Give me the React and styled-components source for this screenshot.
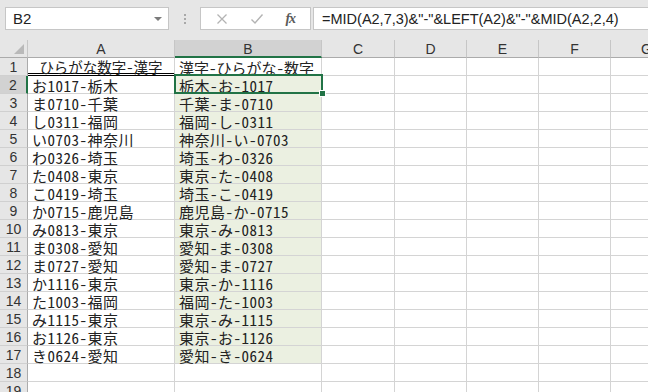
import React from "react";
import styled, { createGlobalStyle } from "styled-components";

const Global = createGlobalStyle`
  html, body { margin: 0; padding: 0; background: #ffffff; overflow: hidden; }
  body { width: 648px; height: 392px; }
  * { box-sizing: border-box; }
`;

const Page = styled.div`
  width: 648px;
  height: 392px;
  overflow: hidden;
  background: #ffffff;
  display: flex;
  flex-direction: column;
`;

const TopBar = styled.div`
  height: 40px;
  flex: none;
  background: #e6e6e6;
  display: flex;
  align-items: flex-start;
  padding: 7px 0 0 5px;
`;

const NameBox = styled.div`
  width: 164px;
  height: 23px;
  background: #ffffff;
  border: 1px solid #c6c6c6;
  display: flex;
  align-items: center;
  justify-content: space-between;
  padding: 0 6px 0 7px;
  font-family: "Liberation Sans", Arial, sans-serif;
  font-size: 15px;
  color: #222;
`;

const DropArrow = styled.span`
  width: 0;
  height: 0;
  border-left: 4px solid transparent;
  border-right: 4px solid transparent;
  border-top: 4px solid #7b7b7b;
  margin-top: 1px;
`;

const Dots = styled.div`
  width: 31px;
  height: 23px;
  display: flex;
  flex-direction: column;
  align-items: center;
  justify-content: center;
  gap: 2px;
  & > span {
    width: 2px;
    height: 2px;
    background: #a8a8a8;
  }
`;

const FxBox = styled.div`
  width: 111px;
  height: 23px;
  background: #ffffff;
  border: 1px solid #c6c6c6;
  display: flex;
  align-items: center;
  justify-content: space-around;
  padding: 0 4px;
`;

const FxLabel = styled.span`
  font-family: "Liberation Serif", "Times New Roman", serif;
  font-style: italic;
  font-weight: bold;
  font-size: 14px;
  color: #5b5b5b;
  letter-spacing: -1px;
`;

const FormulaInput = styled.div`
  flex: 1;
  height: 23px;
  margin-left: 2px;
  background: #ffffff;
  border: 1px solid #c6c6c6;
  border-right: none;
  display: flex;
  align-items: center;
  padding-left: 8px;
  font-family: "Liberation Sans", Arial, sans-serif;
  font-size: 14.5px;
  color: #222;
  white-space: nowrap;
  overflow: hidden;
`;

const Sheet = styled.div`
  flex: 1;
  display: grid;
  grid-template-columns: 28px 147px 147px 73px 72px 72px 72px 72px;
  grid-auto-rows: 18px;
  overflow: hidden;
  background: #ffffff;
`;

const Corner = styled.div`
  background: #e6e6e6;
  border-right: 1px solid #c6c6c6;
  border-bottom: 1px solid #ababab;
  position: relative;
  &::after {
    content: "";
    position: absolute;
    right: 3px;
    bottom: 3px;
    width: 0;
    height: 0;
    border-left: 10px solid transparent;
    border-bottom: 10px solid #b9b9b9;
  }
`;

const ColHeader = styled.div`
  background: ${(p) => (p.$sel ? "#d2d2d2" : "#e6e6e6")};
  border-right: 1px solid #c6c6c6;
  border-bottom: ${(p) => (p.$sel ? "2px solid #217346" : "1px solid #ababab")};
  display: flex;
  align-items: center;
  justify-content: center;
  padding-top: ${(p) => (p.$sel ? "1px" : "0")};
  font-family: "Liberation Sans", Arial, sans-serif;
  font-size: 14px;
  color: #333;
`;

const RowHeader = styled.div`
  background: ${(p) => (p.$sel ? "#d2d2d2" : "#e6e6e6")};
  border-right: ${(p) => (p.$sel ? "2px solid #217346" : "1px solid #ababab")};
  border-bottom: 1px solid #d0d0d0;
  display: flex;
  align-items: center;
  justify-content: center;
  padding-top: 1px;
  font-family: "Liberation Sans", Arial, sans-serif;
  font-size: 14px;
  color: #333;
`;

const Cell = styled.div`
  position: relative;
  background: ${(p) => (p.$shade ? "#ebf0e1" : "#ffffff")};
  border-right: 1px solid #d4d4d4;
  border-bottom: ${(p) => (p.$double ? "3px double #000000" : "1px solid #d4d4d4")};
  display: flex;
  align-items: center;
  justify-content: ${(p) => (p.$center ? "center" : "flex-start")};
  padding: 1px 0 0 ${(p) => (p.$center ? "0" : "4px")};
  font-family: "Noto Sans CJK JP", sans-serif;
  font-feature-settings: "hwid" 1;
  font-size: ${(p) => (p.$center ? "14.5px" : "15px")};
  letter-spacing: ${(p) => (p.$tight ? "0" : "0.5px")};
  line-height: 17px;
  color: #222;
  white-space: nowrap;
`;

const Selection = styled.div`
  position: absolute;
  top: -2px;
  left: -1px;
  right: -2px;
  bottom: -1px;
  border: 2px solid #217346;
  pointer-events: none;
  z-index: 2;
`;

const Handle = styled.div`
  position: absolute;
  right: -5px;
  bottom: -5px;
  width: 7px;
  height: 7px;
  background: #217346;
  border: 1px solid #ffffff;
`;

const rows = [
  ["お1017-栃木", "栃木-お-1017"],
  ["ま0710-千葉", "千葉-ま-0710"],
  ["し0311-福岡", "福岡-し-0311"],
  ["い0703-神奈川", "神奈川-い-0703"],
  ["わ0326-埼玉", "埼玉-わ-0326"],
  ["た0408-東京", "東京-た-0408"],
  ["こ0419-埼玉", "埼玉-こ-0419"],
  ["か0715-鹿児島", "鹿児島-か-0715"],
  ["み0813-東京", "東京-み-0813"],
  ["ま0308-愛知", "愛知-ま-0308"],
  ["ま0727-愛知", "愛知-ま-0727"],
  ["か1116-東京", "東京-か-1116"],
  ["た1003-福岡", "福岡-た-1003"],
  ["み1115-東京", "東京-み-1115"],
  ["お1126-東京", "東京-お-1126"],
  ["き0624-愛知", "愛知-き-0624"],
];

const cols = ["A", "B", "C", "D", "E", "F", "G"];

const XIcon = () => (
  <svg width="12" height="12" viewBox="0 0 12 12">
    <path d="M1.5 1.5 L10.5 10.5 M10.5 1.5 L1.5 10.5" stroke="#b3b3b3" strokeWidth="1.3" fill="none" />
  </svg>
);

const CheckIcon = () => (
  <svg width="14" height="12" viewBox="0 0 14 12">
    <path d="M1.5 6.5 L5 10 L12.5 1.5" stroke="#b3b3b3" strokeWidth="1.4" fill="none" />
  </svg>
);

const Empty = () => cols.slice(2).map((c) => <Cell key={c} />);

export default function App() {
  return (
    <Page>
      <Global />
      <TopBar>
        <NameBox>
          <span>B2</span>
          <DropArrow />
        </NameBox>
        <Dots>
          <span />
          <span />
          <span />
        </Dots>
        <FxBox>
          <XIcon />
          <CheckIcon />
          <FxLabel>fx</FxLabel>
        </FxBox>
        <FormulaInput>=MID(A2,7,3)&amp;"-"&amp;LEFT(A2)&amp;"-"&amp;MID(A2,2,4)</FormulaInput>
      </TopBar>
      <Sheet>
        <Corner />
        {cols.map((c) => (
          <ColHeader key={c} $sel={c === "B"}>
            {c}
          </ColHeader>
        ))}

        <RowHeader>1</RowHeader>
        <Cell $center $double $tight>ひらがな数字-漢字</Cell>
        <Cell $tight>漢字-ひらがな-数字</Cell>
        <Empty />

        {rows.map(([a, b], i) => (
          <React.Fragment key={i}>
            <RowHeader $sel={i === 0}>{i + 2}</RowHeader>
            <Cell>{a}</Cell>
            <Cell $shade>
              {b}
              {i === 0 && (
                <Selection>
                  <Handle />
                </Selection>
              )}
            </Cell>
            <Empty />
          </React.Fragment>
        ))}

        {[18, 19].map((n) => (
          <React.Fragment key={n}>
            <RowHeader>{n}</RowHeader>
            <Cell />
            <Cell />
            <Empty />
          </React.Fragment>
        ))}
      </Sheet>
    </Page>
  );
}
